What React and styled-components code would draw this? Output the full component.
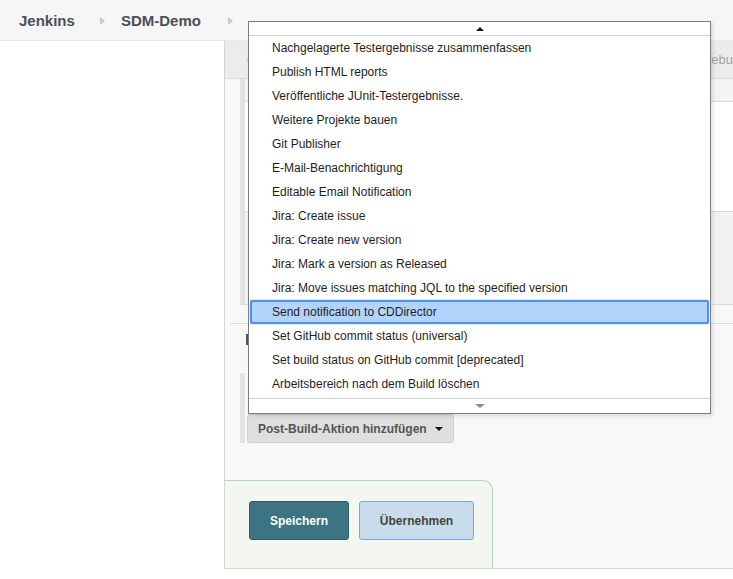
import React from "react";
import styled, { createGlobalStyle } from "styled-components";

const GlobalStyle = createGlobalStyle`
  html, body { margin: 0; padding: 0; background: #fff; }
  body { font-family: "Liberation Sans", Arial, sans-serif; overflow: hidden; }
`;

const postBuildActions = [
  "Nachgelagerte Testergebnisse zusammenfassen",
  "Publish HTML reports",
  "Veröffentliche JUnit-Testergebnisse.",
  "Weitere Projekte bauen",
  "Git Publisher",
  "E-Mail-Benachrichtigung",
  "Editable Email Notification",
  "Jira: Create issue",
  "Jira: Create new version",
  "Jira: Mark a version as Released",
  "Jira: Move issues matching JQL to the specified version",
  "Send notification to CDDirector",
  "Set GitHub commit status (universal)",
  "Set build status on GitHub commit [deprecated]",
  "Arbeitsbereich nach dem Build löschen",
];

const Page = styled.div`
  position: relative;
  width: 733px;
  height: 579px;
  overflow: hidden;
`;

const Header = styled.header`
  height: 40px;
  display: flex;
  align-items: center;
  padding-left: 19px;
  background: #f6f6f6;
  border-bottom: 1px solid #e4e8ea;
`;

const Crumb = styled.span`
  font-size: 15px;
  font-weight: bold;
  color: #4a5058;
`;

const Sep = styled.span`
  width: 0;
  height: 0;
  margin: 1px 16px 0 ${(p) => p.$gap || 25}px;
  border-top: 4px solid transparent;
  border-bottom: 4px solid transparent;
  border-left: 5px solid #c8c8c8;
`;

const Body = styled.div`
  display: flex;
`;

const Sidebar = styled.aside`
  width: 224px;
  flex: none;
  background: #fff;
`;

const Content = styled.main`
  flex: 1;
  height: 527px;
  display: flex;
  flex-direction: column;
  background: #f8f8f8;
  border-left: 1px solid #d4d4d4;
  border-bottom: 1px solid #d4d4d4;
`;

const TabBar = styled.div`
  height: 37px;
  display: flex;
  align-items: center;
  padding-left: 22px;
  background: #ececec;
  border-bottom: 1px solid #dcdcdc;
  white-space: nowrap;
  overflow: hidden;
`;

const Tab = styled.span`
  flex: 0 0 ${(p) => p.$basis || "auto"};
  font-size: 13px;
  color: #a0a0a0;
`;

const Section = styled.div`
  display: flex;
  padding-left: 15px;
  height: ${(p) => p.$height}px;
  flex: none;
`;

const SideBar = styled.div`
  width: 5px;
  flex: none;
  background: #e2e2e2;
`;

const Panels = styled.div`
  flex: 1;
  display: flex;
  flex-direction: column;
`;

const Panel = styled.div`
  height: ${(p) => p.$height}px;
  background: ${(p) => p.$bg};
  border-bottom: 1px solid #dadada;
`;

const Divider = styled.div`
  margin: 18px 0 0 5px;
  border-top: 1px solid #dadada;
`;

const SectionHead = styled.div`
  height: 49px;
  padding: 10px 0 0 21px;
  box-sizing: border-box;
`;

const HeadMark = styled.span`
  display: block;
  width: 2px;
  height: 11px;
  background: #555;
`;

const ActionRow = styled.div`
  display: flex;
  padding-left: 15px;
  height: 70px;
`;

const ActionBody = styled.div`
  display: flex;
  align-items: flex-end;
  padding-left: 2px;
`;

const AddButton = styled.button`
  height: 29px;
  padding: 0 10px 0 10px;
  display: flex;
  align-items: center;
  gap: 8px;
  font-family: inherit;
  font-size: 12px;
  font-weight: bold;
  color: #555;
  background: #dfdfdf;
  border: 1px solid #cfcfcf;
  border-radius: 3px;
`;

const Caret = styled.span`
  width: 0;
  height: 0;
  border-left: 4px solid transparent;
  border-right: 4px solid transparent;
  border-top: 4px solid #111;
`;

const Footer = styled.div`
  margin-top: auto;
  width: 268px;
  height: 88px;
  box-sizing: border-box;
  display: flex;
  align-items: flex-start;
  gap: 10px;
  padding: 20px 0 0 24px;
  background: #f3f7f0;
  border: 1px solid #b3d6c2;
  border-left: none;
  border-bottom: none;
  border-top-right-radius: 10px;
`;

const FooterButton = styled.button`
  height: 39px;
  width: ${(p) => p.$width}px;
  font-family: inherit;
  font-size: 12px;
  font-weight: bold;
  border-radius: 3px;
  color: ${(p) => (p.$primary ? "#fff" : "#444")};
  background: ${(p) => (p.$primary ? "#3c7483" : "#c9dcec")};
  border: 1px solid ${(p) => (p.$primary ? "#2e5c68" : "#74a6d8")};
`;

const Dropdown = styled.div`
  position: absolute;
  left: 248px;
  top: 21px;
  width: 461px;
  height: 391px;
  display: flex;
  flex-direction: column;
  background: #fff;
  border: 1px solid #7c7c7c;
  box-shadow: 2px 2px 4px rgba(0, 0, 0, 0.12);
`;

const ScrollArrow = styled.div`
  height: ${(p) => p.$height}px;
  flex: none;
  display: flex;
  align-items: center;
  justify-content: center;
`;

const ArrowUp = styled.span`
  width: 0;
  height: 0;
  border-left: 4px solid transparent;
  border-right: 4px solid transparent;
  border-bottom: 4px solid #111;
`;

const ArrowDown = styled.span`
  width: 0;
  height: 0;
  border-left: 5px solid transparent;
  border-right: 5px solid transparent;
  border-top: 4px solid #8a8a8a;
`;

const List = styled.ul`
  list-style: none;
  margin: 0;
  padding: 0;
  height: 362px;
  flex: none;
  border-top: 1px solid #d0d0d0;
  border-bottom: 1px solid #d0d0d0;
`;

const Item = styled.li`
  height: 24px;
  box-sizing: border-box;
  display: flex;
  align-items: center;
  padding-left: 23px;
  font-size: 12px;
  color: #1e1e1e;
  white-space: nowrap;
  ${(p) =>
    p.$selected &&
    `
    margin: 0 1px;
    padding-left: 20px;
    background: #b2d3fb;
    border: 2px solid #4d93ec;
    border-radius: 2px;
    box-shadow: 0 0 2px #9cc4f5;
  `}
`;

export default function App() {
  return (
    <Page>
      <GlobalStyle />
      <Header>
        <Crumb>Jenkins</Crumb>
        <Sep />
        <Crumb>SDM-Demo</Crumb>
        <Sep $gap={27} />
      </Header>
      <Body>
        <Sidebar />
        <Content>
          <TabBar>
            <Tab $basis="410px">General</Tab>
            <Tab>Buildumgebung</Tab>
          </TabBar>
          <Section $height={226}>
            <SideBar />
            <Panels>
              <Panel $height={22} $bg="#f4f4f4" />
              <Panel $height={110} $bg="#ffffff" />
              <Panel $height={92} $bg="#f1f1f1" />
            </Panels>
          </Section>
          <Divider />
          <SectionHead>
            <HeadMark />
          </SectionHead>
          <ActionRow>
            <SideBar />
            <ActionBody>
              <AddButton>
                Post-Build-Aktion hinzufügen
                <Caret />
              </AddButton>
            </ActionBody>
          </ActionRow>
          <Footer>
            <FooterButton $primary $width={100}>Speichern</FooterButton>
            <FooterButton $width={115}>Übernehmen</FooterButton>
          </Footer>
        </Content>
      </Body>
      <Dropdown>
        <ScrollArrow $height={13}>
          <ArrowUp />
        </ScrollArrow>
        <List>
          {postBuildActions.map((label) => (
            <Item key={label} $selected={label === "Send notification to CDDirector"}>
              {label}
            </Item>
          ))}
        </List>
        <ScrollArrow $height={14}>
          <ArrowDown />
        </ScrollArrow>
      </Dropdown>
    </Page>
  );
}
